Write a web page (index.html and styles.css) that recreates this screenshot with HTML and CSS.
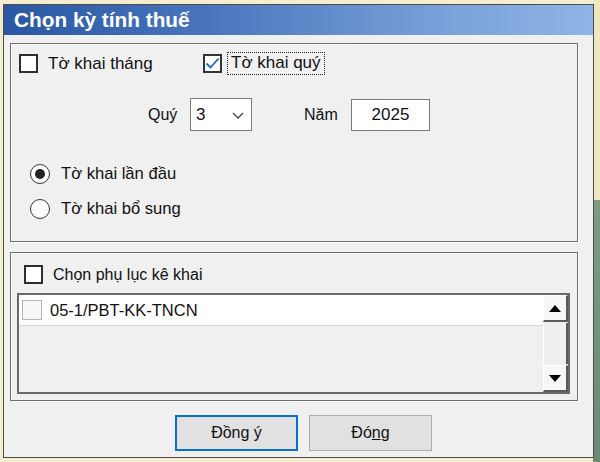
FILE: index.html
```html
<!DOCTYPE html>
<html lang="vi">
<head>
<meta charset="utf-8">
<title>Chọn kỳ tính thuế</title>
<link rel="stylesheet" href="styles.css">
</head>
<body>
<div class="window">
  <div class="titlebar">Chọn kỳ tính thuế</div>
  <div class="client">
    <div class="group group-period">
      <div class="row-types">
        <label class="check check-month"><span class="box"></span><span class="lbl-big">Tờ khai tháng</span></label>
        <label class="check check-quarter"><span class="box checked"><svg viewBox="0 0 19 19" width="19" height="19"><path d="M3.5 9.5 L7.5 13.5 L15.5 4.5" fill="none" stroke="#1a68c4" stroke-width="1.8"/></svg></span><span class="lbl-big focus">Tờ khai quý</span></label>
      </div>
      <div class="row-period">
        <span class="lbl">Quý</span>
        <div class="combo"><span>3</span><svg class="chev" viewBox="0 0 12 7" width="12" height="7"><path d="M1 1 L6 6 L11 1" fill="none" stroke="#444" stroke-width="1.3"/></svg></div>
        <span class="lbl lbl-year">Năm</span>
        <div class="textbox">2025</div>
      </div>
      <div class="radios">
        <label class="radio"><span class="circle on"></span><span>Tờ khai lần đầu</span></label>
        <label class="radio"><span class="circle"></span><span>Tờ khai bổ sung</span></label>
      </div>
    </div>
    <div class="group group-appendix">
      <label class="check check-appendix"><span class="box"></span><span>Chọn phụ lục kê khai</span></label>
      <div class="listbox">
        <div class="list-items">
          <div class="item"><span class="box light"></span><span class="item-text">05-1/PBT-KK-TNCN</span></div>
        </div>
        <div class="scrollbar">
          <div class="sb-btn"><svg viewBox="0 0 12 7" width="12" height="7"><path d="M0 7 L6 0 L12 7 Z" fill="#000"/></svg></div>
          <div class="sb-thumb"></div>
          <div class="sb-btn"><svg viewBox="0 0 12 7" width="12" height="7"><path d="M0 0 L6 7 L12 0 Z" fill="#000"/></svg></div>
        </div>
      </div>
    </div>
    <div class="buttons">
      <button class="btn btn-default">Đồn<u>g</u> ý</button>
      <button class="btn">Đó<u>n</u>g</button>
    </div>
  </div>
</div>
</body>
</html>
```

FILE: styles.css
```css
html, body {
  margin: 0;
  padding: 0;
}
body {
  width: 600px;
  height: 462px;
  overflow: hidden;
  font-family: "Liberation Sans", Arial, sans-serif;
  font-size: 16px;
  color: #111;
  background:
    linear-gradient(to bottom, #efe7c2 0, #efe7c2 200px, #7f9a80 200px, #6c8a74 100%) right top / 7px 100% no-repeat,
    #f4eecf;
}
.window {
  margin: 4px 0 0 3px;
  width: 591px;
  height: 454px;
  box-sizing: border-box;
  border: 1px solid #4c4c4c;
  background: #f0f0f0;
  display: flex;
  flex-direction: column;
}
.titlebar {
  height: 30px;
  flex: none;
  background: linear-gradient(to right, #2a57a3 0%, #4a76bd 35%, #7aa1d9 75%, #8fb4e6 100%);
  color: #fff;
  font-weight: bold;
  font-size: 20.8px;
  line-height: 30px;
  padding-left: 10px;
}
.client {
  padding: 8px 0 0 6px;
  display: flex;
  flex-direction: column;
}
.group {
  width: 568px;
  box-sizing: border-box;
  border: 1px solid #6e6e6e;
  box-shadow: inset 1px 1px 0 #fff, 1px 1px 0 #fff;
}
.group-period {
  height: 199px;
  padding: 9px 0 0 8px;
}
.group-appendix {
  margin-top: 10px;
  height: 149px;
  padding: 12px 0 0 6px;
}
.check, .radio {
  display: flex;
  align-items: center;
}
.box {
  width: 19px;
  height: 19px;
  box-sizing: border-box;
  border: 2px solid #2f2f2f;
  background: #fff;
  flex: none;
  position: relative;
}
.box.checked {
  border-color: #333;
}
.box.checked svg {
  position: absolute;
  left: -2px;
  top: -2px;
}
.box.light {
  border: 1px solid #b5b5b5;
  background: #f7f7f7;
}
.row-types {
  display: flex;
  height: 21px;
  align-items: center;
}
.check-month {
  width: 184px;
}
.lbl-big {
  font-size: 17px;
  margin-left: 10px;
}
.check-quarter .lbl-big {
  margin-left: 6px;
}
.focus {
  outline: 1px dotted #222;
  outline-offset: 0;
  padding: 1px 3px 2px 3px;
  line-height: 18px;
}
.row-period {
  display: flex;
  align-items: center;
  margin-top: 24px;
  padding-left: 129px;
  height: 33px;
}
.lbl {
  width: 42px;
}
.lbl-year {
  margin-left: 52px;
  width: 47px;
}
.combo {
  width: 62px;
  height: 33px;
  box-sizing: border-box;
  border: 1px solid #7a7a7a;
  background: #fff;
  display: flex;
  align-items: center;
  justify-content: space-between;
  padding: 0 7px 0 5px;
  font-size: 17px;
}
.chev {
  margin-top: 2px;
}
.textbox {
  width: 79px;
  height: 32px;
  box-sizing: border-box;
  border: 1px solid #7a7a7a;
  background: #fff;
  display: flex;
  align-items: center;
  justify-content: center;
  font-size: 17px;
}
.radios {
  margin-top: 33px;
  padding-left: 11px;
  display: flex;
  flex-direction: column;
  gap: 15px;
  font-size: 16.6px;
}
.radio {
  height: 20px;
}
.circle {
  width: 20px;
  height: 20px;
  box-sizing: border-box;
  border: 1.5px solid #333;
  border-radius: 50%;
  background: #fff;
  margin-right: 11px;
  flex: none;
  display: flex;
  align-items: center;
  justify-content: center;
}
.circle.on::after {
  content: "";
  width: 10px;
  height: 10px;
  border-radius: 50%;
  background: #222;
}
.check-appendix {
  margin-left: 7px;
  height: 19px;
}
.check-appendix .box {
  margin-right: 10px;
}
.listbox {
  margin-top: 9px;
  width: 553px;
  height: 101px;
  box-sizing: border-box;
  border: 2px solid #6a6a6a;
  display: flex;
  background: #f0f0f0;
}
.list-items {
  flex: 1;
}
.item {
  height: 30px;
  background: #fff;
  border-bottom: 1px solid #d8d8d8;
  display: flex;
  align-items: center;
  padding-left: 3px;
}
.item .box {
  width: 20px;
  height: 20px;
}
.item-text {
  margin-left: 8px;
  font-size: 16.5px;
}
.scrollbar {
  width: 25px;
  display: flex;
  flex-direction: column;
  background: #f0f0f0;
}
.sb-btn {
  height: 27px;
  flex: none;
  box-sizing: border-box;
  background: #f7f7f7;
  border-right: 2px solid #5a5a5a;
  border-bottom: 2px solid #5a5a5a;
  border-top: 1px solid #fff;
  border-left: 1px solid #fff;
  display: flex;
  align-items: center;
  justify-content: center;
}
.sb-thumb {
  flex: 1;
  box-sizing: border-box;
  background: #efefef;
  border-right: 2px solid #5a5a5a;
  border-left: 1px solid #fff;
  margin-top: 1px;
  margin-bottom: 1px;
}
.buttons {
  display: flex;
  gap: 11px;
  margin-top: 14px;
  padding-left: 165px;
}
.btn {
  width: 123px;
  height: 36px;
  box-sizing: border-box;
  background: #e1e1e1;
  border: 1px solid #adadad;
  font-family: "Liberation Sans", Arial, sans-serif;
  font-size: 16px;
  color: #111;
  padding: 0;
}
.btn-default {
  border: 2px solid #0a6fd1;
}
```
